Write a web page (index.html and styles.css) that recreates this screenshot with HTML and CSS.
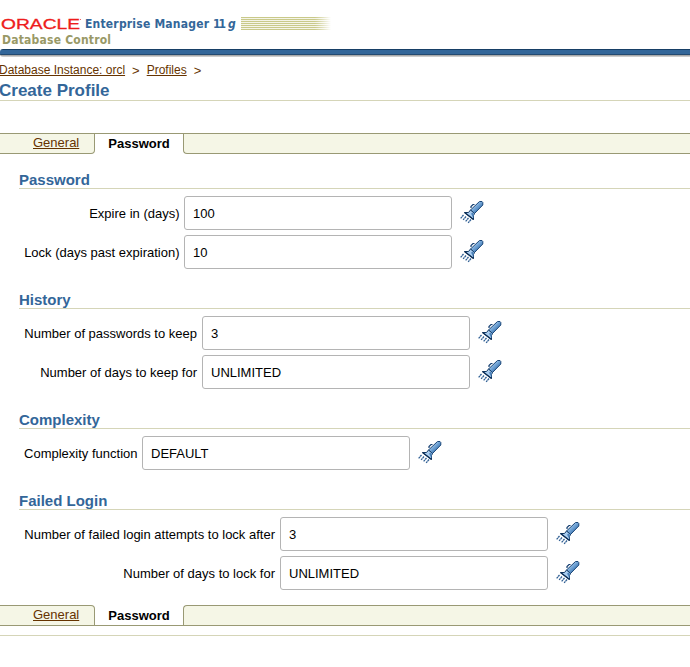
FILE: index.html
```html
<!DOCTYPE html>
<html lang="en">
<head>
<meta charset="utf-8">
<title>Create Profile</title>
<link rel="stylesheet" href="styles.css">
</head>
<body>
<svg class="defs" width="0" height="0" aria-hidden="true">
  <defs>
    <linearGradient id="metal" x1="0" y1="0" x2="1" y2="1">
      <stop offset="0.2" stop-color="#b9daf7"/><stop offset=".5" stop-color="#6c9fd2"/><stop offset=".8" stop-color="#2f68a5"/>
    </linearGradient>
    <symbol id="torch" viewBox="0 0 26 24">
      <path d="M12 8v-1.500l2-2 1.500 0" fill="none" stroke="#123d70" stroke-width="1.200"/>
      <path d="M11.500 10L20.500 1.500h2.500l.8 1v2.500L15.500 13.500z" fill="url(#metal)" stroke="#1a4678" stroke-width="1"/>
      <path d="M5.500 12.500h4l2-2.500 4 3.500-1 2v4z" fill="#a9cdf0" stroke="#103763" stroke-width="1"/>
      <path d="M12 13.500l2.500-1v6z" fill="#4c82ba"/>
      <path d="M5.500 12.500l9 7" stroke="#0c2d54" stroke-width="1.400"/>
      <path d="M4.500 15l-3 3.500M7 16.500l-3 3.500M9.500 18l-3 3.500M12 19.500l-3 3.500" stroke="#2f5f94" stroke-width="1.300" stroke-dasharray="2 .4"/>
    </symbol>
  </defs>
</svg>

<header class="brand">
  <svg class="brand-art" width="690" height="49" viewBox="0 0 690 49">
    <text class="oracle" x="1" y="29" textLength="79" lengthAdjust="spacingAndGlyphs">ORACLE</text>
    <rect x="80" y="19" width="1" height="1" fill="#e66"/>
    <text class="product" x="85" y="28" textLength="124" lengthAdjust="spacing">Enterprise Manager</text>
    <text class="product" x="213" y="28" textLength="13" lengthAdjust="spacing">11</text>
    <text class="product slant" x="228" y="28">g</text>
    <text class="control" x="2" y="44" textLength="109" lengthAdjust="spacing">Database Control</text>
    <defs>
      <linearGradient id="fade" gradientUnits="userSpaceOnUse" x1="241" y1="0" x2="331" y2="0"><stop offset="0" stop-color="#c9c98a"/><stop offset=".82" stop-color="#c9c98a"/><stop offset="1" stop-color="#c9c98a" stop-opacity="0"/></linearGradient>
    </defs>
    <g fill="url(#fade)">
      <rect x="241" y="17" width="90" height="13" opacity=".2"/>
      <rect x="241" y="17" width="90" height="1"/><rect x="241" y="19" width="90" height="1"/>
      <rect x="241" y="21" width="90" height="1"/><rect x="241" y="23" width="90" height="1"/>
      <rect x="241" y="25" width="90" height="1"/><rect x="241" y="27" width="90" height="1"/>
      <rect x="241" y="29" width="90" height="1"/>
    </g>
  </svg>
  <div class="bar"></div>
</header>

<nav class="crumbs"><a href="#">Database Instance: orcl</a><span>&gt;</span><a href="#">Profiles</a><span>&gt;</span></nav>
<h1>Create Profile</h1>

<nav class="tabs top">
  <div class="tab off"><a href="#">General</a></div><div class="tab on">Password</div><div class="tab rest"></div>
</nav>

<main>
  <section>
    <h2>Password</h2>
    <div class="fields password">
      <label for="expire">Expire in (days)</label><input id="expire" value="100"><svg class="icon"><use href="#torch"/></svg>
      <label for="lock">Lock (days past expiration)</label><input id="lock" value="10"><svg class="icon"><use href="#torch"/></svg>
    </div>
  </section>
  <section>
    <h2>History</h2>
    <div class="fields history">
      <label for="keep">Number of passwords to keep</label><input id="keep" value="3"><svg class="icon"><use href="#torch"/></svg>
      <label for="days">Number of days to keep for</label><input id="days" value="UNLIMITED"><svg class="icon"><use href="#torch"/></svg>
    </div>
  </section>
  <section>
    <h2>Complexity</h2>
    <div class="fields complexity">
      <label for="fn">Complexity function</label><input id="fn" value="DEFAULT"><svg class="icon"><use href="#torch"/></svg>
    </div>
  </section>
  <section>
    <h2>Failed Login</h2>
    <div class="fields failed">
      <label for="tries">Number of failed login attempts to lock after</label><input id="tries" value="3"><svg class="icon"><use href="#torch"/></svg>
      <label for="lockdays">Number of days to lock for</label><input id="lockdays" value="UNLIMITED"><svg class="icon"><use href="#torch"/></svg>
    </div>
  </section>
</main>

<nav class="tabs bottom">
  <div class="tab off"><a href="#">General</a></div><div class="tab on">Password</div><div class="tab rest"></div>
</nav>
<div class="end-rule"></div>
</body>
</html>
```
FILE: styles.css
```css
* { box-sizing: border-box; }
body {
  margin: 0;
  overflow: hidden;
  background: #fff;
  color: #000;
  font: 13px/15px "Liberation Sans", Arial, sans-serif;
}
a { color: #663300; }
.defs { display: block; }
.brand { height: 57px; }
.brand-art { display: block; }
.oracle { font: 14px "Liberation Sans", sans-serif; fill: #ee1c1c; stroke: #ee1c1c; stroke-width: .3px; }
.product { font: bold 12px "DejaVu Sans Condensed", "DejaVu Sans", sans-serif; font-stretch: condensed; fill: #336699; }
.slant { font-style: italic; }
.control { font: bold 12px "DejaVu Sans Condensed", "DejaVu Sans", sans-serif; font-stretch: condensed; fill: #999966; }
.bar {
  height: 8px;
  border-radius: 3px 0 0 3px;
  background: linear-gradient(#173f66 0 1px, #336699 1px 5px, #244a70 5px 6px, #aaa 6px 7px, #ccc 7px);
}
.crumbs { height: 24px; margin-left: -1px; padding-top: 6px; font-size: 12px; display: flex; }
.crumbs span { margin: 0 7px; font-size: 13px; color: #663300; }
h1 { margin: 0; height: 20px; border-bottom: 1px solid #d5d5b8; color: #336699; font-size: 17px; line-height: 19px; text-indent: -1px; }

.tabs { display: flex; height: 21px; }
.tabs.top { margin-top: 32px; }
.tab { border: 0 solid #999974; }
.off { width: 95px; padding-left: 33px; background: #f5f6e6; border-right-width: 1px; }
.on { width: 88px; text-align: center; font-weight: bold; }
.rest { flex: 1; background: #f5f6e6; border-left-width: 1px; }
.top .tab { border-top-width: 1px; line-height: 18px; }
.top .on { line-height: 20px; }
.top .off { border-bottom-width: 1px; border-bottom-right-radius: 4px; }
.top .rest { border-bottom-width: 1px; border-bottom-left-radius: 4px; }
.bottom .tab { border-bottom-width: 1px; line-height: 18px; }
.bottom .on { line-height: 21px; }
.bottom .off { border-top-width: 1px; border-top-right-radius: 4px; }
.bottom .rest { border-top-width: 1px; border-top-left-radius: 4px; }

main { padding: 17px 0 0 19px; }
section { margin-bottom: 22px; }
section:last-child { margin-bottom: 15px; }
h2 { margin: 0 0 7px; height: 18px; border-bottom: 1px solid #d5d5b8; color: #336699; font-size: 15px; line-height: 18px; }
.fields { display: grid; grid-template-columns: 161px 268px 26px; column-gap: 4px; row-gap: 5px; }
.history { grid-template-columns: 179px 268px 26px; }
.complexity { grid-template-columns: 119px 268px 26px; }
.failed { grid-template-columns: 257px 268px 26px; }
label { height: 34px; text-align: right; line-height: 36px; padding-right: 1px; white-space: nowrap; }
.password label, .complexity label { padding-right: .5px; }
input {
  width: 268px;
  height: 34px;
  margin: 0;
  padding: 1px 8px 0;
  border: 1px solid #b4b4b4;
  border-radius: 3px;
  background: #fff;
  color: #000;
  font: 13px "Liberation Sans", Arial, sans-serif;
}
.icon { width: 26px; height: 24px; margin: 4px 0 0 3px; }
.end-rule { margin-top: 9px; border-top: 1px solid #d5d5b8; }
```
